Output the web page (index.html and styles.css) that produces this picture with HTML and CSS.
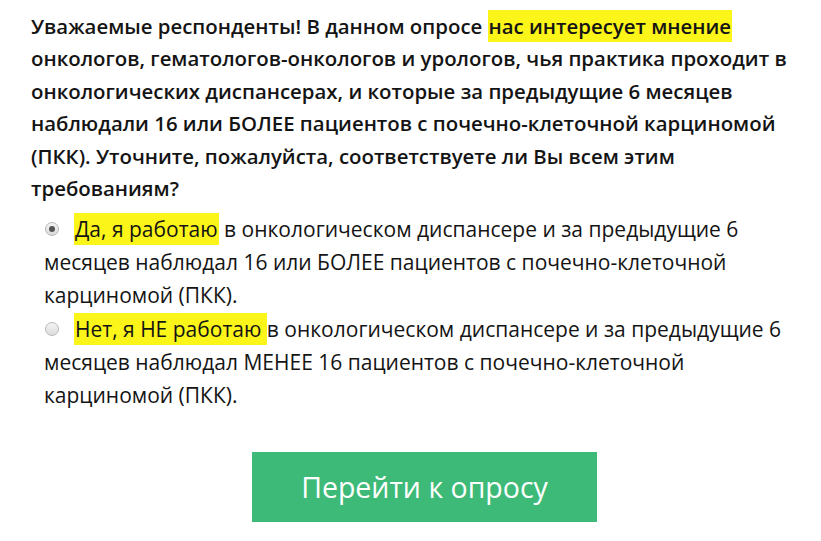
FILE: index.html
```html
<!DOCTYPE html>
<html lang="ru">
<head>
<meta charset="utf-8">
<link rel="stylesheet" href="styles.css">
</head>
<body>
<main class="page">
  <p class="intro">Уважаемые респонденты! В данном опросе <mark class="hl hl-a">нас интересует мнение</mark><br>онкологов, гематологов-онкологов и урологов, чья практика проходит в<br>онкологических диспансерах, и которые за предыдущие 6 месяцев<br>наблюдали 16 или БОЛЕЕ пациентов с почечно-клеточной карциномой<br>(ПКК). Уточните, пожалуйста, соответствуете ли Вы всем этим<br>требованиям?</p>
  <div class="options">
    <label class="option"><span class="radio checked"></span><mark class="hl hl-b">Да, я работаю</mark> в онкологическом диспансере и за предыдущие 6<br>месяцев наблюдал 16 или БОЛЕЕ пациентов с почечно-клеточной<br>карциномой (ПКК).</label>
    <label class="option"><span class="radio"></span><mark class="hl hl-c">Нет, я НЕ работаю </mark>в онкологическом диспансере и за предыдущие 6<br>месяцев наблюдал МЕНЕЕ 16 пациентов с почечно-клеточной<br>карциномой (ПКК).</label>
  </div>
  <div class="actions">
    <button class="go">Перейти к опросу</button>
  </div>
</main>
</body>
</html>
```
FILE: styles.css
```css
html, body { margin: 0; padding: 0; background: #fff; }
body { font-family: "Open Sans", "Liberation Sans", sans-serif; color: #141414; }
.page { padding: 10px 0 0 31px; width: 790px; }
.intro {
  margin: 0;
  font-weight: 600;
  font-size: 20.4px;
  line-height: 32.4px;
  white-space: nowrap;
}
.hl { background: #fbf51a; color: inherit; padding: 2px 1px; }
.hl-c { padding-right: 0; }
.options { margin: 9px 0 0 13px; }
.option {
  display: block;
  font-size: 21px;
  line-height: 33px;
  white-space: nowrap;
  margin-bottom: 1px;
}
.radio {
  display: inline-block;
  width: 12px; height: 12px;
  border-radius: 50%;
  border: 1px solid #b8b8b8;
  background: linear-gradient(#f4f4f4, #dcdcdc);
  margin: 0 15px 0 1px;
  vertical-align: 1px;
  position: relative;
}
.radio.checked::after {
  content: "";
  position: absolute;
  left: 3px; top: 3px;
  width: 6px; height: 6px;
  border-radius: 50%;
  background: #555;
}
.actions { display: flex; margin-top: 40px; padding-left: 221px; }
.go {
  width: 345px; height: 70px;
  background: #3dba78;
  color: #fff;
  border: none;
  font-family: "Open Sans", "Liberation Sans", sans-serif;
  font-size: 28.5px;
  font-weight: 400;
  padding: 0;
}
```
